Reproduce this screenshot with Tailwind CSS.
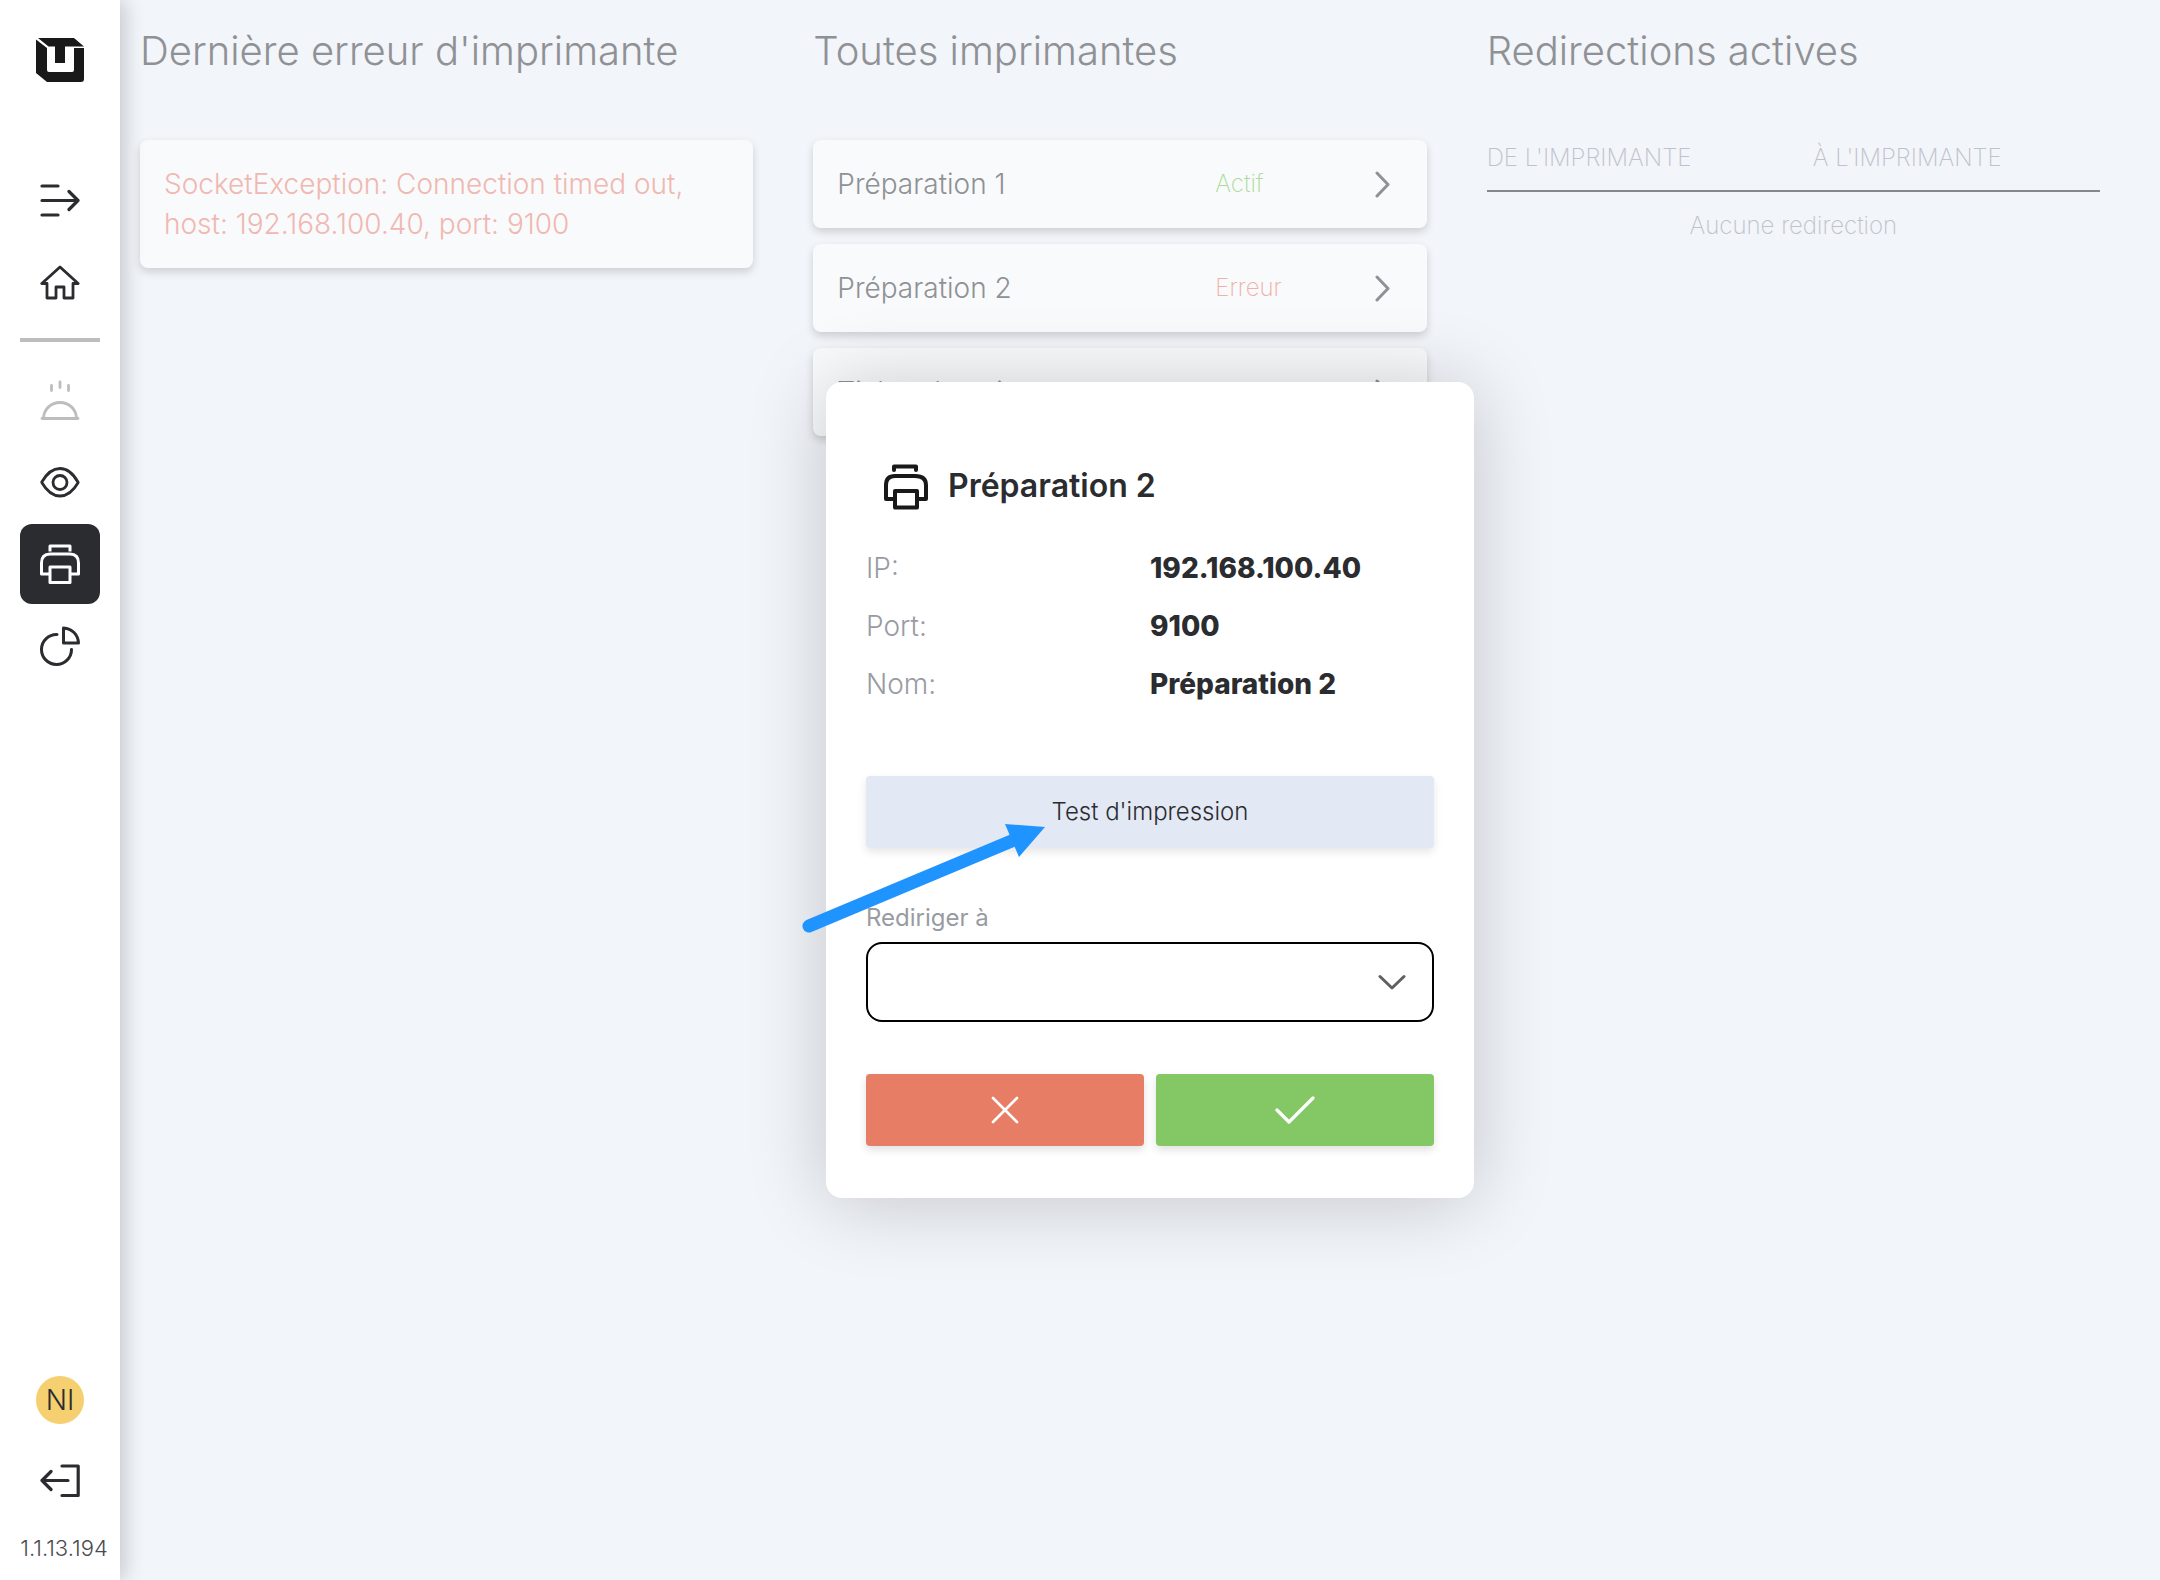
<!DOCTYPE html>
<html lang="fr">
<head>
  <meta charset="UTF-8" />
  <meta name="viewport" content="width=device-width, initial-scale=1.0" />
  <title>Imprimantes</title>
  <script src="https://cdn.jsdelivr.net/npm/@tailwindcss/browser@4"></script>
</head>
<body class="flex min-h-screen bg-[#f2f5fa] font-['Inter',sans-serif] text-[#2b2c30]">

  <!-- Sidebar -->
  <aside class="z-10 flex w-[120px] shrink-0 flex-col items-center bg-white pt-9 pb-4 shadow-[4px_0_20px_rgba(0,0,0,0.2)]">
    <a href="#" aria-label="Accueil" class="mb-[76px]">
      <svg class="size-12" viewBox="0 0 48 48" fill="#191919">
        <path d="M2 2H38L48 10.500H12.500Z" />
        <path d="M0 3.500L11 12V34Q11 36 13 36H36Q38 36 38 34V12H48V43Q48 46 45 46H11L0 37Z" />
        <path d="M19 10H29V27H19Z" />
      </svg>
    </a>

    <nav class="flex flex-col gap-0.5">
      <button type="button" aria-label="Ouvrir le menu" class="flex size-20 items-center justify-center">
        <svg class="size-10" viewBox="0 0 40 40" fill="none" stroke="currentColor" stroke-width="3.200" stroke-linecap="round" stroke-linejoin="round">
          <path d="M2 6H18M2 20.500H38M2 35H18M29 11.500L38 20.500L29 29.500" />
        </svg>
      </button>
      <a href="#" aria-label="Tableau de bord" class="flex size-20 items-center justify-center">
        <svg class="size-10" viewBox="0 0 40 40" fill="none" stroke="currentColor" stroke-width="2.800" stroke-linecap="round" stroke-linejoin="round">
          <path d="M20 5L1.800 21.500H7V36H16V25H24V36H33V21.500H38.200Z" />
        </svg>
      </a>
      <hr class="mt-3.5 mb-4 border-t-4 border-[#bdbdbd]" />
      <a href="#" aria-label="Plats" class="flex size-20 items-center justify-center text-[#bdbdbd]">
        <svg class="size-10" viewBox="0 0 40 40" fill="none" stroke="currentColor" stroke-width="2.800" stroke-linecap="round" stroke-linejoin="round">
          <path d="M2 38.500H38M3.500 38C4 29 11 22.500 20 22.500S36 29 36.500 38M11.500 5.500V10.500M20 2V7.500M28.500 5.500V10.500" />
        </svg>
      </a>
      <a href="#" aria-label="Aperçu" class="flex size-20 items-center justify-center">
        <svg class="size-10" viewBox="0 0 40 40" fill="none" stroke="currentColor" stroke-width="2.800" stroke-linejoin="round">
          <path d="M1.800 20C7 11 13 6.500 20 6.500S33 11 38.200 20.500C33 29.500 27 34 20 34S7 29.500 1.800 20.500Z" />
          <circle cx="20" cy="20.500" r="7" />
        </svg>
      </a>
      <a href="#" aria-label="Imprimantes" aria-current="page" class="flex size-20 items-center justify-center rounded-xl bg-[#2b2c30] text-white">
        <svg class="size-10" viewBox="0 0 40 40" fill="none" stroke="currentColor" stroke-width="3" stroke-linecap="square" stroke-linejoin="round">
          <path d="M10 6V2H30V6M9 30H1.500V19Q1.500 10 10 10H30Q38.500 10 38.500 19V30H31M10 23H30V38.500H10Z" />
        </svg>
      </a>
      <a href="#" aria-label="Statistiques" class="flex size-20 items-center justify-center">
        <svg class="size-10" viewBox="0 0 40 40" fill="none" stroke="currentColor" stroke-width="3" stroke-linecap="round" stroke-linejoin="round">
          <path d="M17 8.500A15 15 0 1 0 31.500 23.500M23.500 2V17H38.500C38 8.500 32 2.500 23.500 2Z" />
        </svg>
      </a>
    </nav>

    <div class="mt-auto flex flex-col items-center">
      <div class="flex size-12 items-center justify-center rounded-full bg-[#f5cf70] text-[28px] font-light">NI</div>
      <button type="button" aria-label="Se déconnecter" class="mt-4 flex size-20 items-center justify-center">
        <svg class="size-10" viewBox="0 0 40 40" fill="none" stroke="currentColor" stroke-width="3.200" stroke-linecap="round" stroke-linejoin="round">
          <path d="M22 6H38.200V35.500H22M28 20.500H2M11 11.500L2 20.500L11 29.500" />
        </svg>
      </button>
      <p class="mt-3 ml-2 text-[22px] leading-8 font-light text-[#4a4b4e]">1.1.13.194</p>
    </div>
  </aside>

  <main class="relative ml-5 flex-1">
    <div class="grid grid-cols-3 gap-[60px] pr-[60px]">

      <section>
        <h1 class="mb-[61px] pt-[23px] text-[40px] leading-[56px] font-light text-[#8f9195]">Dernière erreur d'imprimante</h1>
        <p class="rounded-lg bg-[#f9fafc] p-6 text-[28px] leading-10 font-light text-[#f0b8b0] shadow-[0_4px_8px_rgba(0,0,0,0.16)]">SocketException: Connection timed out, host: 192.168.100.40, port: 9100</p>
      </section>

      <section>
        <h2 class="mb-[61px] pt-[23px] text-[40px] leading-[56px] font-light text-[#8f9195]">Toutes imprimantes</h2>
        <div class="flex flex-col gap-4">
          <button type="button" class="flex items-center rounded-lg bg-[#f9fafc] p-6 text-left leading-10 text-[#8f9195] shadow-[0_4px_8px_rgba(0,0,0,0.16)]">
            <span class="w-[378px] text-[28px] font-light">Préparation 1</span>
            <span class="text-2xl leading-10 font-extralight text-[#a9dc98]">Actif</span>
            <svg class="mr-2.5 ml-auto h-7 w-5" viewBox="0 0 20 28" fill="none" stroke="currentColor" stroke-width="3" stroke-linecap="round" stroke-linejoin="round"><path d="M4 3L15 14.500L4 26" /></svg>
          </button>
          <button type="button" class="flex items-center rounded-lg bg-[#f9fafc] p-6 text-left leading-10 text-[#8f9195] shadow-[0_4px_8px_rgba(0,0,0,0.16)]">
            <span class="w-[378px] text-[28px] font-light">Préparation 2</span>
            <span class="text-2xl leading-10 font-extralight text-[#f0b0a6]">Erreur</span>
            <svg class="mr-2.5 ml-auto h-7 w-5" viewBox="0 0 20 28" fill="none" stroke="currentColor" stroke-width="3" stroke-linecap="round" stroke-linejoin="round"><path d="M4 3L15 14.500L4 26" /></svg>
          </button>
          <button type="button" class="flex items-center rounded-lg bg-[#f9fafc] p-6 text-left leading-10 text-[#8f9195] shadow-[0_4px_8px_rgba(0,0,0,0.16)]">
            <span class="w-[378px] text-[28px] font-light">Ticket de caisse</span>
            <svg class="mr-2.5 ml-auto h-7 w-5" viewBox="0 0 20 28" fill="none" stroke="currentColor" stroke-width="3" stroke-linecap="round" stroke-linejoin="round"><path d="M4 3L15 14.500L4 26" /></svg>
          </button>
        </div>
      </section>

      <section>
        <h2 class="mb-[61px] pt-[23px] text-[40px] leading-[56px] font-light text-[#8f9195]">Redirections actives</h2>
        <table class="w-full table-fixed text-2xl font-extralight text-[#bfc2ca]">
          <thead>
            <tr class="border-b-2 border-[#85878c] text-left">
              <th class="w-[326px] pt-0.5 pb-4 leading-8 font-extralight">DE L'IMPRIMANTE</th>
              <th class="pt-0.5 pb-4 leading-8 font-extralight">À L'IMPRIMANTE</th>
            </tr>
          </thead>
          <tbody>
            <tr>
              <td colspan="2" class="pt-4 text-center leading-9">Aucune redirection</td>
            </tr>
          </tbody>
        </table>
      </section>
    </div>

    <!-- Printer dialog -->
    <div class="absolute inset-0 flex items-center justify-center">
      <div role="dialog" aria-labelledby="printer-name" class="relative w-[648px] rounded-2xl bg-white px-10 pt-20 pb-[52px] shadow-[0_4px_80px_rgba(0,0,0,0.2)]">
        <div class="mb-[38px] flex items-center gap-[18px] pl-4">
          <svg class="size-12" viewBox="0 0 48 48" fill="none" stroke="#191919" stroke-width="4" stroke-linecap="round" stroke-linejoin="round">
            <path d="M12 8V4.500H34V8M12 37H4V23Q4 14 13 14H33Q44 14 44 23V37H35M13 29H35V45.500H13Z" />
          </svg>
          <h3 id="printer-name" class="text-[32px] leading-[48px] font-semibold">Préparation 2</h3>
        </div>

        <dl class="grid grid-cols-2 gap-y-[18px] text-[28px] leading-10">
          <dt class="font-light text-[#999ba3]">IP:</dt>
          <dd class="font-extrabold">192.168.100.40</dd>
          <dt class="font-light text-[#999ba3]">Port:</dt>
          <dd class="font-extrabold">9100</dd>
          <dt class="font-light text-[#999ba3]">Nom:</dt>
          <dd class="font-extrabold">Préparation 2</dd>
        </dl>

        <button type="button" class="mt-[72px] h-[72px] w-full rounded bg-[#e2e8f4] text-2xl font-light shadow-[0_4px_8px_rgba(0,0,0,0.1)]">Test d'impression</button>

        <label for="redirect" class="mt-[53px] mb-[7px] block text-2xl leading-[34px] text-[#999ba3]">Rediriger à</label>
        <div class="relative">
          <select id="redirect" class="block h-20 w-full appearance-none rounded-2xl border-2 border-black bg-white px-6 text-2xl">
            <option value=""></option>
            <option>Préparation 1</option>
          </select>
          <svg class="pointer-events-none absolute top-1/2 right-7 h-5 w-7 -translate-y-1/2" viewBox="0 0 28 20" fill="none" stroke="#5f6063" stroke-width="3" stroke-linecap="round" stroke-linejoin="round"><path d="M2 4.500L14 16L26 4.500" /></svg>
        </div>

        <div class="mt-[52px] grid grid-cols-2 gap-3">
          <button type="button" aria-label="Annuler" class="flex h-[72px] items-center justify-center rounded bg-[#e87d65] shadow-[0_4px_8px_rgba(0,0,0,0.12)]">
            <svg class="size-7" viewBox="0 0 28 28" fill="none" stroke="white" stroke-width="2.600" stroke-linecap="round"><path d="M2 2L26 26M26 2L2 26" /></svg>
          </button>
          <button type="button" aria-label="Valider" class="flex h-[72px] items-center justify-center rounded bg-[#84c866] shadow-[0_4px_8px_rgba(0,0,0,0.12)]">
            <svg class="h-7 w-10" viewBox="0 0 40 28" fill="none" stroke="white" stroke-width="3.200" stroke-linecap="round" stroke-linejoin="round"><path d="M2 14L14 26L38 2" /></svg>
          </button>
        </div>

        <!-- Arrow towards the test button -->
        <svg class="pointer-events-none absolute top-[436px] -left-7 h-[120px] w-[260px]" viewBox="0 0 260 120" fill="#2094fe">
          <path d="M11 108L216 22" stroke="#2094fe" stroke-width="13" stroke-linecap="round" />
          <path d="M247 9L207 6L221 39Z" />
        </svg>
      </div>
    </div>
  </main>

</body>
</html>
